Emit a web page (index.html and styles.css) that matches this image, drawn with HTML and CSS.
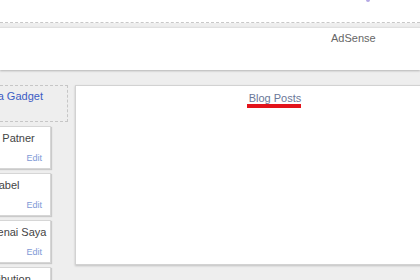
FILE: index.html
```html
<!DOCTYPE html>
<html lang="id">
    <head>
        <meta charset="utf-8">
        <meta name="viewport" content="width=device-width, initial-scale=1">
        <link rel="stylesheet" href="styles.css">
    </head>
<body>

    <!-- strip atas -->
    <div class="top">
        <span class="dot"></span>
    </div>

    <div class="page">
        <div class="ad-bar">
            <span class="ad-label">AdSense</span>
        </div>

        <div class="columns">
            <div class="sidebar">
                <div class="add-gadget"><a href="#">Add a Gadget</a></div>

                <div class="widget">
                    <div class="widget-title">Best Patner</div>
                    <a class="edit" href="#">Edit</a>
                </div>
                <div class="widget">
                    <div class="widget-title">Label</div>
                    <a class="edit" href="#">Edit</a>
                </div>
                <div class="widget">
                    <div class="widget-title">Mengenai Saya</div>
                    <a class="edit" href="#">Edit</a>
                </div>
                <div class="widget">
                    <div class="widget-title">Attribution</div>
                    <a class="edit" href="#">Edit</a>
                </div>
            </div>

            <div class="main-box">
                <span class="main-title">Blog Posts</span>
            </div>
        </div>
    </div>

</body>
</html>
```

FILE: styles.css
```css
body {
    margin: 0;
    background-color: #eeeeee;
    font-family: "Liberation Sans", Arial, sans-serif;
    font-size: 11px;
    overflow: hidden;
}

a {
    text-decoration: none;
}

.top {
    height: 22px;
    background-color: white;
    border-bottom: 1px dashed #c8c8c8;
}

.dot {
    display: block;
    margin-left: 366px;
    width: 4px;
    height: 2px;
    background-color: #b4a8e4;
    border-radius: 0 0 2px 2px;
}

.page {
    padding-top: 4px;
}

.ad-bar {
    height: 38px;
    padding-top: 4px;
    padding-left: 331px;
    background-color: white;
    border-top: 1px solid #e0e0e0;
    box-shadow: 0 1px 2px rgba(0, 0, 0, 0.25);
}

.ad-label {
    color: #666666;
    line-height: 13px;
}

.columns {
    display: flex;
    align-items: flex-start;
    margin-top: 15px;
}

.sidebar {
    flex-shrink: 0;
    width: 118px;
    margin-left: -50px;
}

.add-gadget {
    box-sizing: border-box;
    height: 37px;
    margin-bottom: 2px;
    padding-top: 4px;
    border: 1px dashed #c6c6c6;
    text-align: center;
    line-height: 13px;
}

.add-gadget a {
    color: #3b5cc4;
}

.widget {
    box-sizing: border-box;
    width: 90px;
    height: 43px;
    margin-top: 4px;
    margin-left: 11px;
    padding: 5px 8px 0;
    background-color: white;
    border: 1px solid #d6d6d6;
    box-shadow: 1px 1px 1px rgba(0, 0, 0, 0.15);
}

.widget-title {
    color: #444444;
    text-align: center;
    line-height: 13px;
    white-space: nowrap;
}

.edit {
    display: block;
    margin-top: 8px;
    text-align: right;
    font-size: 9px;
    line-height: 11px;
    color: #7d9ad6;
}

.main-box {
    flex-shrink: 0;
    box-sizing: border-box;
    width: 398px;
    height: 180px;
    margin-left: 7px;
    padding-top: 6px;
    background-color: white;
    border: 1px solid #d2d2d2;
    box-shadow: 0 1px 2px rgba(0, 0, 0, 0.2);
    text-align: center;
}

.main-title {
    display: inline-block;
    padding-left: 2px;
    line-height: 12px;
    color: #6b7898;
    border-bottom: 4px solid #e3131b;
}
```
